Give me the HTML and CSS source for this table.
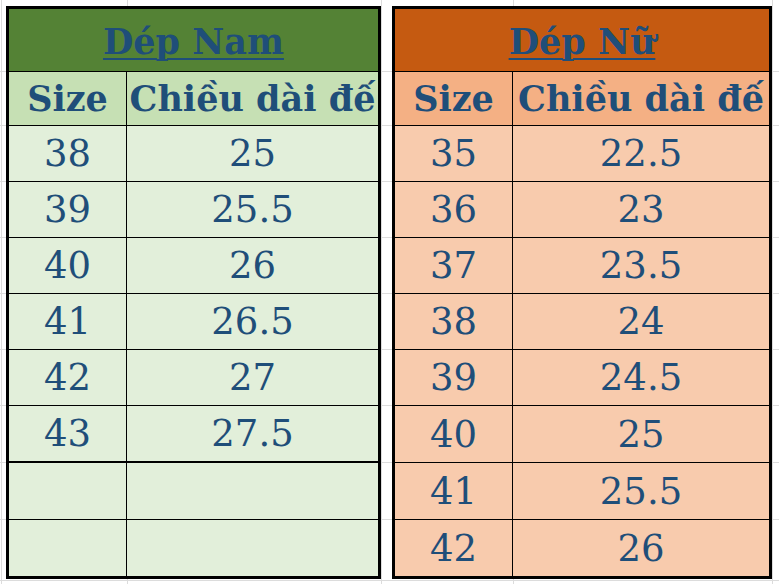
FILE: index.html
```html
<!DOCTYPE html>
<html lang="vi">
<head>
<meta charset="utf-8">
<title>Bảng size dép</title>
<link rel="stylesheet" href="styles.css">
</head>
<body>
<main class="sheet">
  <section class="tbl tbl-men">
    <div class="title"><span>Dép Nam</span></div>
    <div class="row head"><div class="c">Size</div><div class="c">Chiều dài đế</div></div>
    <div class="row"><div class="c">38</div><div class="c">25</div></div>
    <div class="row"><div class="c">39</div><div class="c">25.5</div></div>
    <div class="row"><div class="c">40</div><div class="c">26</div></div>
    <div class="row"><div class="c">41</div><div class="c">26.5</div></div>
    <div class="row"><div class="c">42</div><div class="c">27</div></div>
    <div class="row tall sep"><div class="c">43</div><div class="c">27.5</div></div>
    <div class="row tall"><div class="c"></div><div class="c"></div></div>
    <div class="row last"><div class="c"></div><div class="c"></div></div>
  </section>
  <section class="tbl tbl-women">
    <div class="title"><span>Dép Nữ</span></div>
    <div class="row head"><div class="c">Size</div><div class="c">Chiều dài đế</div></div>
    <div class="row"><div class="c">35</div><div class="c">22.5</div></div>
    <div class="row"><div class="c">36</div><div class="c">23</div></div>
    <div class="row"><div class="c">37</div><div class="c">23.5</div></div>
    <div class="row"><div class="c">38</div><div class="c">24</div></div>
    <div class="row"><div class="c">39</div><div class="c">24.5</div></div>
    <div class="row tall"><div class="c">40</div><div class="c">25</div></div>
    <div class="row tall"><div class="c">41</div><div class="c">25.5</div></div>
    <div class="row last"><div class="c">42</div><div class="c">26</div></div>
  </section>
</main>
</body>
</html>
```
FILE: styles.css
```css
* { box-sizing: border-box; }

html, body { height: 100%; }

body {
  margin: 0;
  background-color: #ffffff;
  background-image:
    linear-gradient(to right, transparent 0 1px, #dcdcdc 1px 2px, transparent 2px 127px, #dcdcdc 127px 128px, transparent 128px 381px, #dcdcdc 381px 382px, transparent 382px 513px, #dcdcdc 513px 514px, transparent 514px 772px, #dcdcdc 772px 773px, transparent 773px),
    linear-gradient(to bottom, transparent 0 71px, #dcdcdc 71px 72px, transparent 72px 125px, #dcdcdc 125px 126px, transparent 126px 181px, #dcdcdc 181px 182px, transparent 182px 237px, #dcdcdc 237px 238px, transparent 238px 293px, #dcdcdc 293px 294px, transparent 294px 349px, #dcdcdc 349px 350px, transparent 350px 405px, #dcdcdc 405px 406px, transparent 406px 462px, #dcdcdc 462px 463px, transparent 463px 519px, #dcdcdc 519px 520px, transparent 520px 580px, #dcdcdc 580px 581px, transparent 581px);
  font-family: "DejaVu Serif", "Liberation Serif", serif;
  color: #1f4e79;
}

.sheet {
  display: flex;
  align-items: flex-start;
  gap: 11px;
  padding: 6px 0 0 6px;
}

.tbl {
  border: 3px solid #000;
  width: 375px;
}

.tbl-women { width: 380px; }

.title {
  height: 63px;
  border-bottom: 1px solid #000;
  display: flex;
  align-items: center;
  justify-content: center;
  padding-top: 2px;
  font-weight: bold;
  font-size: 35px;
  line-height: 1;
}

.title span {
  text-decoration: underline;
  text-decoration-thickness: 2px;
  text-underline-offset: 4px;
}

.row {
  display: grid;
  grid-template-columns: 118px 1fr;
  height: 56px;
  border-bottom: 1px solid #000;
  font-size: 37px;
  line-height: 1;
}

.row.head {
  height: 54px;
  font-weight: bold;
  font-size: 35px;
}

.row.tall { height: 57px; }
.row.sep { border-bottom-width: 2px; }
.row.last { height: 56px; border-bottom: 0; }

.c {
  display: flex;
  align-items: center;
  justify-content: center;
  white-space: nowrap;
}

.c:first-child { border-right: 1px solid #000; }

.tbl-men .title { background: #548235; }
.tbl-men .head { background: #c6e0b4; }
.tbl-men .row:not(.head) { background: #e2efda; }

.tbl-women .title { background: #c55a11; }
.tbl-women .head { background: #f4b084; }
.tbl-women .row:not(.head) { background: #f8cbad; }
```
